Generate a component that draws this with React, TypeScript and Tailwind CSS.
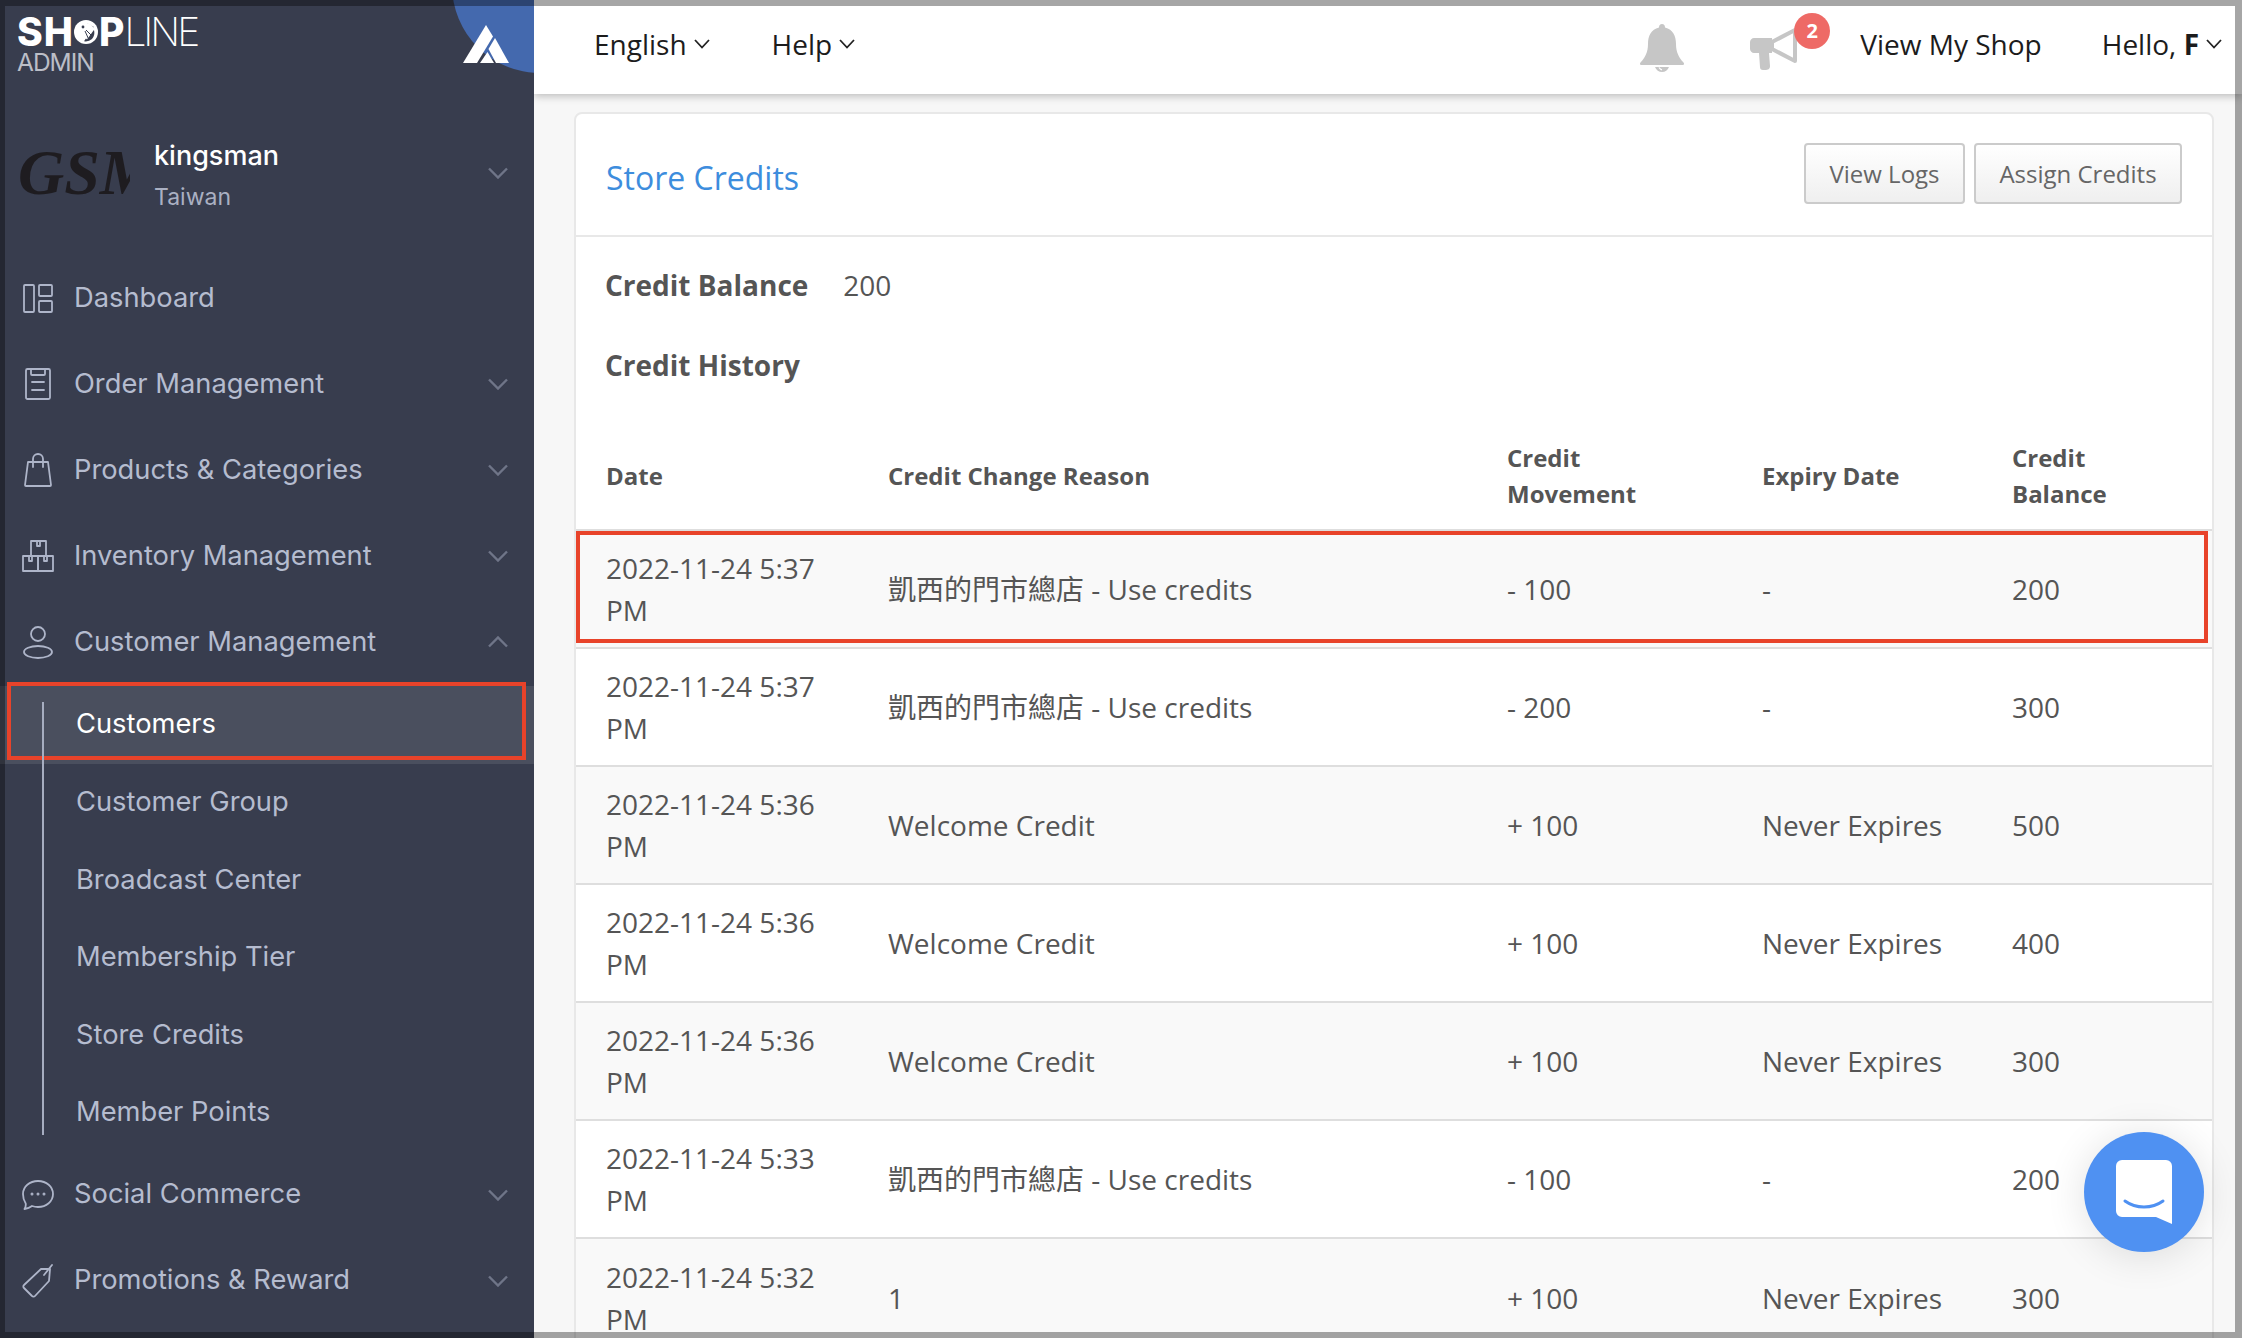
import { ReactNode } from 'react'

const stroke = {
  fill: 'none',
  stroke: '#aeb5c9',
  strokeWidth: 1.8,
  strokeLinejoin: 'round' as const,
  strokeLinecap: 'round' as const,
}

function Chevron({ up }: { up?: boolean }) {
  return (
    <svg width="20" height="12" viewBox="0 0 20 12" className={up ? 'rotate-180' : ''}>
      <polyline points="1,1.5 10,10.5 19,1.5" fill="none" stroke="#6f7588" strokeWidth="2.4" />
    </svg>
  )
}

function SmallChevron() {
  return (
    <svg width="16" height="10" viewBox="0 0 16 10" className="ml-[7px]">
      <polyline points="1,1 8,8.500 15,1" fill="none" stroke="#222" strokeWidth="1.8" />
    </svg>
  )
}

const icons: Record<string, ReactNode> = {
  dashboard: (
    <svg width="32" height="32" viewBox="0 0 32 32" {...stroke}>
      <rect x="2" y="3" width="10" height="27" rx="1" />
      <rect x="17" y="3" width="13" height="11" rx="1" />
      <rect x="17" y="19" width="13" height="11" rx="1" />
    </svg>
  ),
  orders: (
    <svg width="32" height="34" viewBox="0 0 32 34" {...stroke}>
      <rect x="4" y="2" width="24" height="30" rx="1.5" />
      <path d="M9 2v5a1 1 0 0 0 1 1h12a1 1 0 0 0 1-1V2M10 15h12M10 23h12" />
    </svg>
  ),
  products: (
    <svg width="32" height="36" viewBox="0 0 32 36" {...stroke}>
      <path d="M6 10h20l3 23a1 1 0 0 1-1 1H4a1 1 0 0 1-1-1z" />
      <path d="M11 15V7a5 5 0 0 1 10 0v8" />
    </svg>
  ),
  inventory: (
    <svg width="32" height="34" viewBox="0 0 32 34" {...stroke}>
      <rect x="9" y="2" width="15" height="15" />
      <rect x="1" y="17" width="15" height="15" />
      <rect x="16" y="17" width="15" height="15" />
      <path d="M15 2v5h3V2M7 17v5h3v-5M22 17v5h3v-5" />
    </svg>
  ),
  customers: (
    <svg width="32" height="34" viewBox="0 0 32 34" {...stroke}>
      <circle cx="16" cy="9" r="7" />
      <ellipse cx="16" cy="27" rx="14" ry="6" />
    </svg>
  ),
  social: (
    <svg width="32" height="30" viewBox="0 0 32 30" {...stroke}>
      <path d="M16 1c8.500 0 15 5.800 15 13s-6.500 13-15 13c-2 0-4-.3-6-1-2 1.500-4.500 2.500-7.500 3 1-1.500 1.500-3.500 1.200-5.500C2 21 1 17.500 1 14 1 6.800 7.500 1 16 1z" />
      <circle cx="10" cy="14" r=".6" />
      <circle cx="16" cy="14" r=".6" />
      <circle cx="22" cy="14" r=".6" />
    </svg>
  ),
  promo: (
    <svg width="32" height="34" viewBox="0 0 32 34" {...stroke}>
      <path d="M19 5h9l-1 12-14 15a2 2 0 0 1-3 0L2 24a2 2 0 0 1 0-3z" />
      <path d="M22 11l8-10" />
    </svg>
  ),
}

function NavRow({ icon, label, open, chevron = true }: { icon: string; label: string; open?: boolean; chevron?: boolean }) {
  return (
    <div className="flex h-[86px] items-center pl-[22px] pr-[26px] text-[27.3px] text-[#b5bccf]">
      <span className="flex w-[32px] justify-center">{icons[icon]}</span>
      <span className="ml-[20px] flex-1">{label}</span>
      {chevron && <Chevron up={open} />}
    </div>
  )
}

function SubRow({ label, active }: { label: string; active?: boolean }) {
  return (
    <div
      className={
        active
          ? 'relative flex h-[77.6px] items-center bg-[#4a4f5e] pl-[76px] text-[27.3px] text-white'
          : 'flex h-[77.6px] items-center pl-[76px] text-[27.3px] text-[#b5bccf]'
      }
    >
      {label}
      {active && (
        <div className="absolute -top-[4px] bottom-[4px] left-[7px] right-[8px] border-[4px] border-[#e8432a]" />
      )}
    </div>
  )
}

function Sidebar() {
  return (
    <aside className="relative h-full w-[534px] shrink-0 overflow-hidden bg-[#383d4e] font-['Inter',sans-serif]">
      {/* blue corner behind the logo */}
      <div className="absolute left-[452px] top-[-103px] h-[176px] w-[176px] rounded-full bg-[#4469ae]" />
      <svg width="46" height="38" viewBox="0 0 46 38" className="absolute left-[463px] top-[25px]">
        <polygon points="23,0 0,38 14,38 30,11.500" fill="#fff" />
        <polygon points="32,13 46,38 33,38 25.500,24" fill="#fff" />
        <polygon points="24.500,27 31,38 17,38" fill="#fff" />
      </svg>

      {/* logo */}
      <div className="relative h-[94px] pl-[17px] pt-[17px] text-white">
        <div className="flex h-[29px] items-center font-['Inter',sans-serif] text-[39px] leading-[29px]">
          <span className="font-extrabold tracking-[1px]">SH</span>
          <svg width="24" height="28" viewBox="0 0 24 28" className="mr-[1px]">
            <circle cx="12" cy="14" r="12" fill="#fff" />
            <path d="M13 5.500a9.500 9.500 0 0 1 5 15.500 9.500 9.500 0 0 1-8 2.300L20 9z" fill="#383d4e" />
            <path d="M7 6l8-.5 6 5-8 11-8-8z" fill="#fff" />
            <circle cx="9" cy="9" r="1.400" fill="#383d4e" />
            <path d="M11 13l4 9M12 12l7 7" stroke="#383d4e" strokeWidth="1" />
          </svg>
          <span className="font-extrabold">P</span>
          <span className="font-extralight tracking-[-3px]">LINE</span>
        </div>
        <div className="mt-[6px] text-[24.5px] leading-[20px] tracking-[-1px] text-[#bbbec7]">ADMIN</div>
      </div>

      {/* shop */}
      <div className="relative flex h-[161px] items-center pb-[3px] pl-[18px] pr-[26px]">
        <div className="h-[44px] w-[112px] overflow-hidden font-['Liberation_Serif',serif] text-[64px] font-bold italic leading-[44px] text-[#1e1c20]">
          GSM
        </div>
        <div className="ml-[24px] mt-[7px] flex-1">
          <div className="text-[27px] font-medium leading-[36px] text-white">kingsman</div>
          <div className="mt-[5px] text-[23px] leading-[36px] text-[#aab0c2]">Taiwan</div>
        </div>
        <Chevron />
      </div>

      <nav className="relative">
        <NavRow icon="dashboard" label="Dashboard" chevron={false} />
        <NavRow icon="orders" label="Order Management" />
        <NavRow icon="products" label="Products & Categories" />
        <NavRow icon="inventory" label="Inventory Management" />
        <NavRow icon="customers" label="Customer Management" open />
        <div className="relative mt-[1px]">
          <div className="absolute bottom-[17px] left-[42px] top-[16px] z-10 w-[2px] bg-[#a6adc0]" />
          <SubRow label="Customers" active />
          <SubRow label="Customer Group" />
          <SubRow label="Broadcast Center" />
          <SubRow label="Membership Tier" />
          <SubRow label="Store Credits" />
          <SubRow label="Member Points" />
        </div>
        <NavRow icon="social" label="Social Commerce" />
        <NavRow icon="promo" label="Promotions & Reward" />
      </nav>
    </aside>
  )
}

function Header() {
  return (
    <header className="relative z-10 flex h-[94px] shrink-0 items-center bg-white pb-[6px] pl-[60px] pr-[20px] text-[28px] text-[#1c1c1c] shadow-[0_2px_8px_rgba(0,0,0,0.25)]">
      <span className="flex items-center">
        English
        <SmallChevron />
      </span>
      <span className="ml-[62px] flex items-center">
        Help
        <SmallChevron />
      </span>

      <svg width="44" height="48" viewBox="0 0 44 48" className="ml-auto mt-[8px]" fill="#c6c6c6">
        <path d="M22 0c-2 0-3 1.500-3 3.500C11 5.500 8 12 8 20c0 8-3 14-7.500 18.500-1 1.300-.5 2.500 1 2.500h41c1.500 0 2-1.200 1-2.500C39 34 36 28 36 20c0-8-3-14.500-11-16.500C25 1.500 24 0 22 0z" />
        <path d="M15 43c1 3 4 5 7 5s6-2 7-5z" />
        <path d="M19 43.500c.8 1.300 1.800 2 3 2.300" stroke="#fff" strokeWidth="1.200" fill="none" />
      </svg>

      <div className="relative ml-[66px] mr-[63px] mt-[6px] h-[44px] w-[47px]">
        <svg width="47" height="44" viewBox="0 0 47 44" className="mt-[2px]">
          <path d="M22 15L45 3v31L22 22z" fill="none" stroke="#c6c6c6" strokeWidth="4" strokeLinejoin="round" />
          <path d="M4 11h18v15H19l1 13c0 3-2 4-5 4h-2c-2 0-3-1-3-3L9 26H4c-2 0-4-2-4-4v-7c0-2 2-4 4-4z" fill="#c6c6c6" />
        </svg>
        <span className="absolute left-[44px] top-[-12px] flex h-[36px] w-[36px] items-center justify-center rounded-full bg-[#ee6a66] text-[20px] font-bold text-white">
          2
        </span>
      </div>

      <span>View My Shop</span>
      <span className="ml-[60px] flex items-center">
        Hello,&nbsp;<b>F</b>
        <SmallChevron />
      </span>
    </header>
  )
}

type Row = { date: string; reason: string; move: string; expiry: string; balance: string }

const rows: Row[] = [
  { date: '2022-11-24 5:37 PM', reason: '凱西的門市總店 - Use credits', move: '- 100', expiry: '-', balance: '200' },
  { date: '2022-11-24 5:37 PM', reason: '凱西的門市總店 - Use credits', move: '- 200', expiry: '-', balance: '300' },
  { date: '2022-11-24 5:36 PM', reason: 'Welcome Credit', move: '+ 100', expiry: 'Never Expires', balance: '500' },
  { date: '2022-11-24 5:36 PM', reason: 'Welcome Credit', move: '+ 100', expiry: 'Never Expires', balance: '400' },
  { date: '2022-11-24 5:36 PM', reason: 'Welcome Credit', move: '+ 100', expiry: 'Never Expires', balance: '300' },
  { date: '2022-11-24 5:33 PM', reason: '凱西的門市總店 - Use credits', move: '- 100', expiry: '-', balance: '200' },
  { date: '2022-11-24 5:32 PM', reason: '1', move: '+ 100', expiry: 'Never Expires', balance: '300' },
]

function Card() {
  return (
    <section className="rounded-[8px] border-2 border-[#e8e8e8] bg-white text-[#555]">
      <div className="flex h-[123px] items-center justify-between border-b-2 border-[#e8e8e8] pl-[30px] pr-[30px]">
        <h1 className="pt-[7px] text-[32px] text-[#3d8ddd]">Store Credits</h1>
        <div className="mb-[2px] flex gap-[9px] text-[24px] text-[#666]">
          <button className="h-[61px] w-[161px] rounded-[4px] border-2 border-[#cbcbcb] bg-gradient-to-b from-white to-[#efefef]">
            View Logs
          </button>
          <button className="h-[61px] w-[208px] rounded-[4px] border-2 border-[#cbcbcb] bg-gradient-to-b from-white to-[#efefef]">
            Assign Credits
          </button>
        </div>
      </div>

      <div className="pb-[38px] pl-[29px] pt-[28px] text-[28px] leading-[40px]">
        <div>
          <b className="font-bold">Credit Balance</b>
          <span className="ml-[35px]">200</span>
        </div>
        <div className="mt-[40px] font-bold">Credit History</div>
      </div>

      <div className="relative">
        <table className="w-full table-fixed border-collapse text-left text-[28px] leading-[42px]">
          <thead>
            <tr className="h-[107px] text-[24px] leading-[36px]">
              <th className="w-[284px] pl-[30px] font-bold">Date</th>
              <th className="w-[619px] pl-[28px] font-bold">Credit Change Reason</th>
              <th className="w-[255px] pl-[28px] font-bold">
                Credit
                <br />
                Movement
              </th>
              <th className="w-[250px] pl-[28px] font-bold">Expiry Date</th>
              <th className="pl-[28px] font-bold">
                Credit
                <br />
                Balance
              </th>
            </tr>
          </thead>
          <tbody>
            {rows.map((r, i) => (
              <tr key={i} className={i % 2 === 0 ? 'h-[118px] border-t-2 border-[#dedede] bg-[#f9f9f9]' : 'h-[118px] border-t-2 border-[#dedede] bg-white'}>
                <td className="pl-[30px] pr-[40px]">{r.date}</td>
                <td className="pl-[28px]">{r.reason}</td>
                <td className="pl-[28px]">{r.move}</td>
                <td className="pl-[28px]">{r.expiry}</td>
                <td className="pl-[28px]">{r.balance}</td>
              </tr>
            ))}
          </tbody>
        </table>
        <div className="absolute left-[0px] right-[4px] top-[108px] h-[112px] border-[4px] border-[#e8432a]" />
      </div>
    </section>
  )
}

export default function App() {
  return (
    <div className="relative flex h-[1338px] w-[2242px] overflow-hidden bg-[#f7f7f7] font-['Open_Sans','Noto_Sans_CJK_TC',sans-serif]">
      <Sidebar />
      <main className="flex h-full min-w-0 flex-1 flex-col overflow-hidden">
        <Header />
        <div className="pl-[40px] pr-[28px] pt-[18px]">
          <Card />
        </div>
      </main>

      {/* chat bubble */}
      <button className="absolute bottom-[86px] right-[38px] flex h-[120px] w-[120px] items-center justify-center rounded-full bg-[#4f91f2] shadow-[0_4px_40px_rgba(0,0,0,0.12)]">
        <svg width="56" height="64" viewBox="0 0 56 64">
          <path d="M6 0h44a6 6 0 0 1 6 6v58l-16-7H6a6 6 0 0 1-6-6V6a6 6 0 0 1 6-6z" fill="#fff" />
          <path d="M9 41c11 8 27 8 38 0" fill="none" stroke="#4f91f2" strokeWidth="3" strokeLinecap="round" />
        </svg>
      </button>

      {/* dimmed edge of the screenshot */}
      <div className="pointer-events-none absolute inset-0 z-20 border-b-[6px] border-l-[5px] border-r-[7px] border-t-[6px] border-black/35" />
    </div>
  )
}
